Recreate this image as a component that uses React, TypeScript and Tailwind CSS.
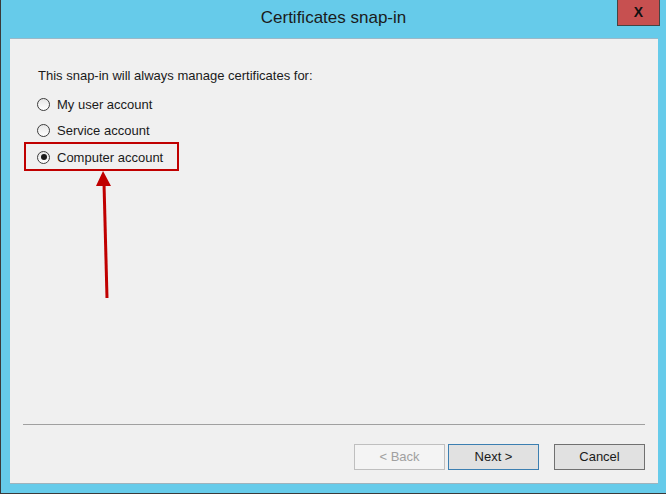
import React from 'react'

const options = [
  { label: 'My user account', checked: false },
  { label: 'Service account', checked: false },
  { label: 'Computer account', checked: true },
]

function Radio({ checked }: { checked: boolean }) {
  return (
    <span className="flex h-[13px] w-[13px] shrink-0 items-center justify-center rounded-full border border-[#3c3c3c] bg-[linear-gradient(#e6e6e6,#ffffff)]">
      {checked ? <span className="h-[6px] w-[6px] rounded-full bg-[#1a1a1a]" /> : null}
    </span>
  )
}

function DialogButton({
  children,
  variant,
}: {
  children: React.ReactNode
  variant: 'disabled' | 'default' | 'normal'
}) {
  const styles = {
    disabled: 'border-[#bfbfbf] bg-[#f4f4f4] text-[#a0a0a0]',
    default: 'border-[#3c7fb1] bg-[#e1e1e1] text-[#1a1a1a]',
    normal: 'border-[#707070] bg-[#e1e1e1] text-[#1a1a1a]',
  }[variant]
  return (
    <button
      type="button"
      className={`flex h-[26px] w-[91px] items-center justify-center border text-[13px] ${styles}`}
    >
      {children}
    </button>
  )
}

export default function App() {
  return (
    <div
      className="flex h-[494px] w-[666px] flex-col border-b border-l border-[#3a3a3a] bg-[#66cbea] text-[#1a1a1a]"
      style={{ fontFamily: '"Liberation Sans", Arial, sans-serif' }}
    >
      <div className="relative flex h-[38px] shrink-0 items-center justify-center pb-[2px]">
        <span className="text-[17px] text-[#1b1b1b]">Certificates snap-in</span>
        <button
          type="button"
          className="absolute right-[6px] top-0 flex h-[26px] w-[43px] items-center justify-center border border-t-0 border-[#444444] bg-[#c75050] text-[14px] font-bold text-[#111111]"
        >
          X
        </button>
      </div>

      <div className="relative ml-[9px] mr-[8px] flex h-[445px] flex-col border-t border-[#9ab8c8] bg-[#f0f0f0] shadow-[0_1px_0_#9fb3bd]">
        <p className="ml-[28px] mt-[29px] text-[13px] leading-[16px]">
          This snap-in will always manage certificates for:
        </p>
        <div className="ml-[27px] mt-[12px] flex flex-col gap-[10px]">
          {options.map((o) => (
            <label key={o.label} className="flex h-[16.5px] items-center gap-[7px] text-[13px]">
              <Radio checked={o.checked} />
              <span>{o.label}</span>
            </label>
          ))}
        </div>

        {/* annotation */}
        <div className="absolute left-[14px] top-[103px] h-[29px] w-[155px] border-2 border-[#c00000]" />
        <svg className="absolute left-0 top-0" width="200" height="280" viewBox="0 0 200 280">
          <line x1="97" y1="259" x2="94" y2="144" stroke="#c00000" strokeWidth="3" />
          <polygon points="93,132 86,147 101,147" fill="#c00000" />
        </svg>

        <div className="flex-1" />
        <div className="mx-[13px] h-[2px] border-t border-[#a0a0a0] border-b-white" />
        <div className="mb-[13px] mr-[13px] mt-[18px] flex justify-end">
          <DialogButton variant="disabled">&lt; Back</DialogButton>
          <div className="ml-[3px]">
            <DialogButton variant="default">Next &gt;</DialogButton>
          </div>
          <div className="ml-[15px]">
            <DialogButton variant="normal">Cancel</DialogButton>
          </div>
        </div>
      </div>
    </div>
  )
}
